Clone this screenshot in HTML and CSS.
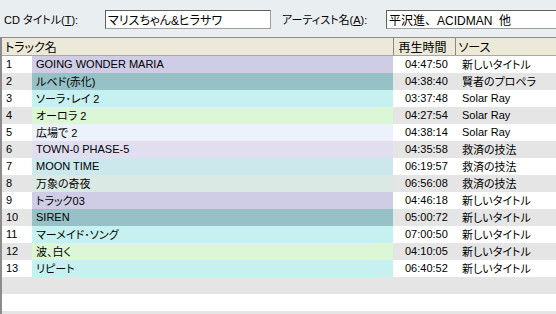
FILE: index.html
```html
<html>

<head>
    <meta charset="utf-8">
    <link rel="stylesheet" href="styles.css">
</head>

<body>
    <div id="info">
        <label class="lbl">CD タイトル(<u>T</u>):</label>
        <input type="text" id="cdtitle" class="box box-title" value="マリスちゃん&amp;ヒラサワ" />
        <label class="lbl lbl-artist">アーティスト名(<u>A</u>):</label>
        <input type="text" id="artist" class="box box-artist" value="平沢進、ACIDMAN  他" />
    </div>

    <div id="list">
        <table id="tb">
            <colgroup>
                <col class="c-no">
                <col class="c-name">
                <col class="c-time">
                <col class="c-src">
            </colgroup>
            <thead>
                <tr>
                    <th colspan="2">トラック名</th>
                    <th>再生時間</th>
                    <th>ソース</th>
                </tr>
            </thead>
            <tbody>
                <tr>
                    <td>1</td>
                    <td class="t1">GOING WONDER MARIA</td>
                    <td>04:47:50</td>
                    <td>新しいタイトル</td>
                </tr>
                <tr>
                    <td>2</td>
                    <td class="t2">ルベド(赤化)</td>
                    <td>04:38:40</td>
                    <td>賢者のプロペラ</td>
                </tr>
                <tr>
                    <td>3</td>
                    <td class="t3">ソーラ･レイ 2</td>
                    <td>03:37:48</td>
                    <td>Solar Ray</td>
                </tr>
                <tr>
                    <td>4</td>
                    <td class="t4">オーロラ 2</td>
                    <td>04:27:54</td>
                    <td>Solar Ray</td>
                </tr>
                <tr>
                    <td>5</td>
                    <td class="t5">広場で 2</td>
                    <td>04:38:14</td>
                    <td>Solar Ray</td>
                </tr>
                <tr>
                    <td>6</td>
                    <td class="t6">TOWN-0 PHASE-5</td>
                    <td>04:35:58</td>
                    <td>救済の技法</td>
                </tr>
                <tr>
                    <td>7</td>
                    <td class="t7">MOON TIME</td>
                    <td>06:19:57</td>
                    <td>救済の技法</td>
                </tr>
                <tr>
                    <td>8</td>
                    <td class="t8">万象の奇夜</td>
                    <td>06:56:08</td>
                    <td>救済の技法</td>
                </tr>
                <tr>
                    <td>9</td>
                    <td class="t1">トラック03</td>
                    <td>04:46:18</td>
                    <td>新しいタイトル</td>
                </tr>
                <tr>
                    <td>10</td>
                    <td class="t2">SIREN</td>
                    <td>05:00:72</td>
                    <td>新しいタイトル</td>
                </tr>
                <tr>
                    <td>11</td>
                    <td class="t3">マーメイド･ソング</td>
                    <td>07:00:50</td>
                    <td>新しいタイトル</td>
                </tr>
                <tr>
                    <td>12</td>
                    <td class="t4">波、白く</td>
                    <td>04:10:05</td>
                    <td>新しいタイトル</td>
                </tr>
                <tr>
                    <td>13</td>
                    <td class="t3">リピート</td>
                    <td>06:40:52</td>
                    <td>新しいタイトル</td>
                </tr>
                <tr class="empty"><td></td><td></td><td></td><td></td></tr>
                <tr class="empty"><td></td><td></td><td></td><td></td></tr>
                <tr class="empty"><td></td><td></td><td></td><td></td></tr>
            </tbody>
        </table>
    </div>
</body>

</html>
```

FILE: styles.css
```css
body {
    margin: 0;
    background: #e9eef1;
    font-family: "Liberation Sans", "Noto Sans CJK JP", sans-serif;
    font-size: 11px;
    font-feature-settings: "palt";
    color: #000;
    overflow: hidden;
}

#info {
    display: flex;
    align-items: center;
    height: 37px;
    padding-left: 4px;
}

.lbl {
    width: 101px;
    flex: none;
}

.lbl-artist {
    box-sizing: border-box;
    width: 115px;
    padding-left: 11px;
}

u {
    text-decoration: underline;
}

.box {
    flex: none;
    box-sizing: border-box;
    font-family: inherit;
    font-size: 12px;
    font-feature-settings: "palt";
    height: 19px;
    padding: 0 2px;
    margin-top: 1px;
    border: 1px solid #a0a0a0;
    border-top-color: #606060;
    border-left-color: #606060;
    background: #fff;
}

.box-title {
    width: 166px;
}

.box-artist {
    width: 174px;
    font-feature-settings: normal;
}

#list {
    border-top: 1px solid #8c8c8c;
    border-left: 2px solid #8c8c8c;
    background: #fff;
}

#tb {
    border-collapse: collapse;
    table-layout: fixed;
    width: 560px;
}

.c-no {
    width: 30px;
}

.c-name {
    width: 361px;
}

.c-time {
    width: 62px;
}

#tb th {
    background: #ece9d8;
    font-weight: normal;
    font-size: 12px;
    text-align: left;
    height: 16px;
    padding: 0 0 0 3px;
    border-right: 1px solid #8c8a7c;
    border-bottom: 1px solid #aca899;
    white-space: nowrap;
}

#tb th:nth-child(2) {
    padding-left: 5px;
}

#tb td {
    height: 17px;
    padding: 0 0 0 4px;
    white-space: nowrap;
    overflow: hidden;
    font-size: 11px;
}

#tb td:nth-child(3) {
    padding-left: 12px;
}

#tb td:nth-child(4) {
    padding-left: 7px;
}

#tb tbody tr:nth-child(even) {
    background: #e5e5e5;
}

.t1 {
    background: #cfcce6;
}

.t2 {
    background: #95c1c7;
}

.t3 {
    background: #c7f1f1;
}

.t4 {
    background: #dbf7d5;
}

.t5 {
    background: #ecf1fb;
}

.t6 {
    background: #e1def0;
}

.t7 {
    background: #cce8ec;
}

.t8 {
    background: #dae9e3;
}
```
